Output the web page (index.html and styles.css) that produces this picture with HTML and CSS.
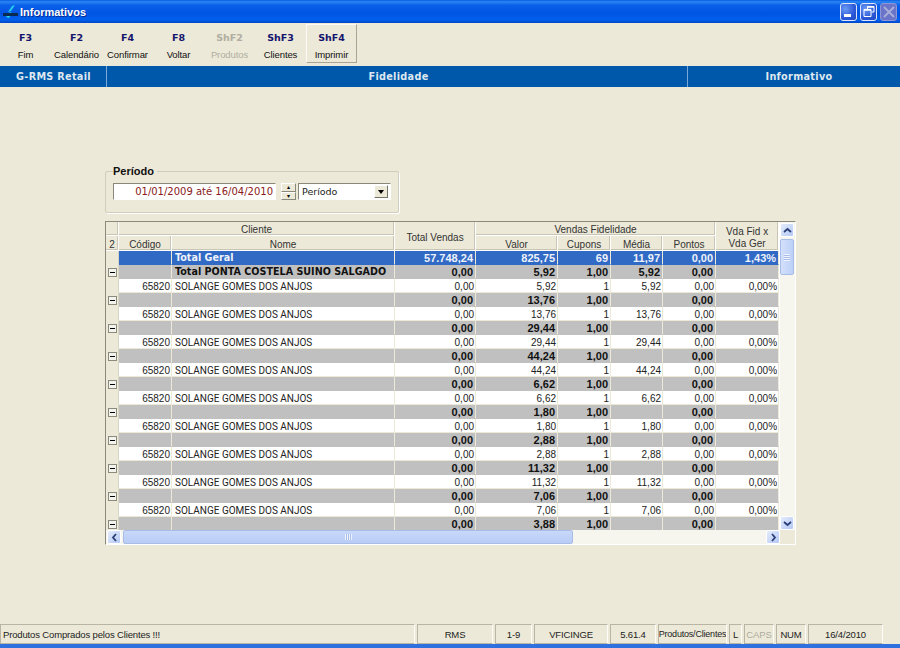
FILE: index.html
```html
<!DOCTYPE html>
<html lang="pt">
<head>
<meta charset="utf-8">
<title>Informativos</title>
<link rel="stylesheet" href="styles.css">
</head>
<body>
<div class="window">
  <header class="titlebar">
    <svg class="app-icon" width="18" height="16" viewBox="0 0 18 16"><path d="M6 8 L10 2 L13 1 L9 7 Z" fill="#22d0e8"/><path d="M4 13 L8 8 L10 9 L7 14 Z" fill="#22d0e8"/><rect x="1" y="9" width="15" height="3" fill="#0a2a50"/></svg>
    <span class="title-text">Informativos</span>
    <div class="win-buttons">
      <span class="win-btn"><svg width="16" height="16" viewBox="0 0 16 16"><rect x="3" y="10" width="7" height="3" fill="#fff"/></svg></span>
      <span class="win-btn"><svg width="16" height="16" viewBox="0 0 16 16"><path d="M6.500 5V2.500H13V8H10.500M3 5.500H10V12.500H3Z" fill="none" stroke="#fff" stroke-width="1"/><path d="M6.500 3H13M3 6H10" stroke="#fff" stroke-width="1.500"/></svg></span>
      <span class="win-btn win-btn-off"><svg width="16" height="16" viewBox="0 0 16 16"><path d="M3 3L13 13M13 3L3 13" stroke="#a8aed8" stroke-width="2"/></svg></span>
    </div>
  </header>

  <nav class="toolbar">
    <div class="tool"><b>F3</b><span>Fim</span></div>
    <div class="tool"><b>F2</b><span>Calendário</span></div>
    <div class="tool"><b>F4</b><span>Confirmar</span></div>
    <div class="tool"><b>F8</b><span>Voltar</span></div>
    <div class="tool tool-off"><b>ShF2</b><span>Produtos</span></div>
    <div class="tool"><b>ShF3</b><span>Clientes</span></div>
    <div class="tool tool-raised"><b>ShF4</b><span>Imprimir</span></div>
  </nav>

  <div class="bluebar">
    <div class="bb bb-a">G-RMS Retail</div>
    <div class="bb bb-b">Fidelidade</div>
    <div class="bb bb-c">Informativo</div>
  </div>

  <main class="content">
    <fieldset class="period">
      <legend>Período</legend>
      <div class="period-row">
        <div class="date-field">01/01/2009 até 16/04/2010</div>
        <div class="spin"><span class="spin-btn">▴</span><span class="spin-btn">▾</span></div>
        <div class="combo"><span class="combo-text">Período</span><span class="combo-btn"><i class="arrow-down"></i></span></div>
      </div>
    </fieldset>

    <section class="gridbox">
      <div class="grid-clip">
        <table class="grid">
          <colgroup>
            <col class="c0"><col class="c1"><col class="c2"><col class="c3"><col class="c4"><col class="c5"><col class="c6"><col class="c7"><col class="c8">
          </colgroup>
          <thead>
            <tr>
              <th class="corner"></th><th colspan="2">Cliente</th><th rowspan="2" class="tv">Total Vendas</th><th colspan="4">Vendas Fidelidade</th><th rowspan="2" class="two-line">Vda Fid x<br>Vda Ger</th>
            </tr>
            <tr>
              <th class="corner level">2</th><th>Código</th><th>Nome</th><th>Valor</th><th>Cupons</th><th>Média</th><th>Pontos</th>
            </tr>
          </thead>
          <tbody>
            <tr class="sel"><td class="rh"></td><td></td><td class="txt">Total Geral</td><td>57.748,24</td><td>825,75</td><td>69</td><td>11,97</td><td>0,00</td><td>1,43%</td></tr>
            <tr class="sub"><td class="rh"><i class="minus"></i></td><td></td><td class="txt">Total PONTA COSTELA SUINO SALGADO</td><td>0,00</td><td>5,92</td><td>1,00</td><td>5,92</td><td>0,00</td><td></td></tr>
            <tr class="row"><td class="rh"></td><td>65820</td><td class="txt">SOLANGE GOMES DOS ANJOS</td><td>0,00</td><td>5,92</td><td>1</td><td>5,92</td><td>0,00</td><td>0,00%</td></tr>
            <tr class="sub"><td class="rh"><i class="minus"></i></td><td></td><td class="txt"></td><td>0,00</td><td>13,76</td><td>1,00</td><td></td><td>0,00</td><td></td></tr>
            <tr class="row"><td class="rh"></td><td>65820</td><td class="txt">SOLANGE GOMES DOS ANJOS</td><td>0,00</td><td>13,76</td><td>1</td><td>13,76</td><td>0,00</td><td>0,00%</td></tr>
            <tr class="sub"><td class="rh"><i class="minus"></i></td><td></td><td class="txt"></td><td>0,00</td><td>29,44</td><td>1,00</td><td></td><td>0,00</td><td></td></tr>
            <tr class="row"><td class="rh"></td><td>65820</td><td class="txt">SOLANGE GOMES DOS ANJOS</td><td>0,00</td><td>29,44</td><td>1</td><td>29,44</td><td>0,00</td><td>0,00%</td></tr>
            <tr class="sub"><td class="rh"><i class="minus"></i></td><td></td><td class="txt"></td><td>0,00</td><td>44,24</td><td>1,00</td><td></td><td>0,00</td><td></td></tr>
            <tr class="row"><td class="rh"></td><td>65820</td><td class="txt">SOLANGE GOMES DOS ANJOS</td><td>0,00</td><td>44,24</td><td>1</td><td>44,24</td><td>0,00</td><td>0,00%</td></tr>
            <tr class="sub"><td class="rh"><i class="minus"></i></td><td></td><td class="txt"></td><td>0,00</td><td>6,62</td><td>1,00</td><td></td><td>0,00</td><td></td></tr>
            <tr class="row"><td class="rh"></td><td>65820</td><td class="txt">SOLANGE GOMES DOS ANJOS</td><td>0,00</td><td>6,62</td><td>1</td><td>6,62</td><td>0,00</td><td>0,00%</td></tr>
            <tr class="sub"><td class="rh"><i class="minus"></i></td><td></td><td class="txt"></td><td>0,00</td><td>1,80</td><td>1,00</td><td></td><td>0,00</td><td></td></tr>
            <tr class="row"><td class="rh"></td><td>65820</td><td class="txt">SOLANGE GOMES DOS ANJOS</td><td>0,00</td><td>1,80</td><td>1</td><td>1,80</td><td>0,00</td><td>0,00%</td></tr>
            <tr class="sub"><td class="rh"><i class="minus"></i></td><td></td><td class="txt"></td><td>0,00</td><td>2,88</td><td>1,00</td><td></td><td>0,00</td><td></td></tr>
            <tr class="row"><td class="rh"></td><td>65820</td><td class="txt">SOLANGE GOMES DOS ANJOS</td><td>0,00</td><td>2,88</td><td>1</td><td>2,88</td><td>0,00</td><td>0,00%</td></tr>
            <tr class="sub"><td class="rh"><i class="minus"></i></td><td></td><td class="txt"></td><td>0,00</td><td>11,32</td><td>1,00</td><td></td><td>0,00</td><td></td></tr>
            <tr class="row"><td class="rh"></td><td>65820</td><td class="txt">SOLANGE GOMES DOS ANJOS</td><td>0,00</td><td>11,32</td><td>1</td><td>11,32</td><td>0,00</td><td>0,00%</td></tr>
            <tr class="sub"><td class="rh"><i class="minus"></i></td><td></td><td class="txt"></td><td>0,00</td><td>7,06</td><td>1,00</td><td></td><td>0,00</td><td></td></tr>
            <tr class="row"><td class="rh"></td><td>65820</td><td class="txt">SOLANGE GOMES DOS ANJOS</td><td>0,00</td><td>7,06</td><td>1</td><td>7,06</td><td>0,00</td><td>0,00%</td></tr>
            <tr class="sub"><td class="rh"><i class="minus"></i></td><td></td><td class="txt"></td><td>0,00</td><td>3,88</td><td>1,00</td><td></td><td>0,00</td><td></td></tr>
          </tbody>
        </table>
      </div>
      <div class="vscroll">
        <span class="sb-btn"><svg width="9" height="7" viewBox="0 0 9 7"><path d="M1 5L4.500 2L8 5" fill="none" stroke="#2a3f78" stroke-width="1.800"/></svg></span>
        <span class="thumb thumb-v"><i class="grip-v"></i></span>
        <span class="sb-gap"></span>
        <span class="sb-btn"><svg width="9" height="7" viewBox="0 0 9 7"><path d="M1 2L4.500 5L8 2" fill="none" stroke="#2a3f78" stroke-width="1.800"/></svg></span>
      </div>
      <div class="hscroll">
        <span class="sb-btn"><svg width="7" height="9" viewBox="0 0 7 9"><path d="M5 1L2 4.500L5 8" fill="none" stroke="#2a3f78" stroke-width="1.800"/></svg></span>
        <span class="thumb thumb-h"><i class="grip-h"></i></span>
        <span class="sb-gap"></span>
        <span class="sb-btn"><svg width="7" height="9" viewBox="0 0 7 9"><path d="M2 1L5 4.500L2 8" fill="none" stroke="#2a3f78" stroke-width="1.800"/></svg></span>
      </div>
      <div class="sb-corner"></div>
    </section>
  </main>

  <footer class="statusbar">
    <div class="panel p-msg">Produtos Comprados pelos Clientes !!!</div>
    <div class="panel p-rms">RMS</div>
    <div class="panel p-pg">1-9</div>
    <div class="panel p-user">VFICINGE</div>
    <div class="panel p-ver">5.61.4</div>
    <div class="panel p-mod">Produtos/Clientes</div>
    <div class="panel p-l">L</div>
    <div class="panel p-caps">CAPS</div>
    <div class="panel p-num">NUM</div>
    <div class="panel p-date">16/4/2010</div>
  </footer>
  <div class="bottom-frame"></div>
</div>
</body>
</html>
```

FILE: styles.css
```css
* { box-sizing: border-box; }
html, body { margin: 0; padding: 0; }
body { width: 900px; height: 648px; overflow: hidden; background: #ece9d8; font-family: "Liberation Sans", Arial, sans-serif; color: #000; }
.window { width: 900px; height: 648px; display: flex; flex-direction: column; }

.titlebar { height: 23px; flex: none; display: flex; align-items: center; padding-left: 2px; background: linear-gradient(180deg, #0a5ce0 0%, #2a86f4 8%, #0a60e8 22%, #0054e3 60%, #0060ee 85%, #0048c8 100%); }
.app-icon { flex: none; }
.title-text { font-weight: bold; font-size: 11px; color: #fff; text-shadow: 1px 1px 0 #0a2a90; }
.win-buttons { margin-left: auto; display: flex; gap: 3px; padding-right: 3px; }
.win-btn { width: 17px; height: 18px; display: block; border: 1px solid #dfe6fa; border-radius: 3px; background: radial-gradient(circle at 30% 30%, #6a9af4 0%, #2a58d8 60%, #2048c0 100%); overflow: hidden; }
.win-btn svg { display: block; }
.win-btn-off { background: #6a74c8; border-color: #8f96d6; }

.toolbar { height: 41px; flex: none; display: flex; padding-top: 1px; }
.tool { width: 51px; height: 39px; display: flex; flex-direction: column; align-items: center; padding-top: 8px; font-size: 9.500px; color: #111; white-space: nowrap; }
.tool b { font-family: "DejaVu Sans", sans-serif; font-size: 9.500px; line-height: 12px; color: #14146e; }
.tool span { margin-top: 5px; line-height: 11px; letter-spacing: -.1px; }
.tool-off b, .tool-off span { color: #b0aea0; }
.tool-raised { border: 1px solid; border-color: #fbfaf4 #a8a596 #a8a596 #fbfaf4; padding-top: 7px; }

.bluebar { height: 21px; margin-top: 2px; flex: none; display: flex; background: #0058aa; color: #dfe8f0; font-family: "DejaVu Sans", sans-serif; font-weight: bold; font-size: 9.700px; letter-spacing: .3px; }
.bb { display: flex; align-items: center; justify-content: center; border-right: 1px solid #7aa8d8; }
.bb-a { width: 107px; padding-left: 1px; }
.bb-b { width: 581px; padding-left: 3px; }
.bb-c { flex: 1; border-right: 0; padding-left: 10px; }

.content { flex: 1; display: flex; flex-direction: column; align-items: flex-start; padding: 79px 0 0 105px; min-height: 0; }

.period { width: 294px; height: 47px; margin: 0; padding: 6px 7px 0 7px; border: 1px solid #d0cdbc; border-radius: 2px; box-shadow: 1px 1px 0 #fff; }
.period legend { padding: 0 3px 0 0; font-weight: bold; font-size: 11px; line-height: 11px; color: #111; }
.period-row { display: flex; align-items: flex-start; }
.date-field { width: 163px; height: 17px; padding-right: 2px; text-align: right; font-family: "DejaVu Sans", sans-serif; font-size: 10px; line-height: 16px; color: #8a1a20; background: #fff; border: 1px solid; border-color: #8a887a #fff #fff #8a887a; }
.spin { width: 15px; height: 17px; margin-left: 5px; display: flex; flex-direction: column; }
.spin-btn { flex: 1; display: flex; align-items: center; justify-content: center; font-size: 6px; line-height: 1; background: #ece9d8; border: 1px solid; border-color: #fff #8a887a #8a887a #fff; overflow: hidden; }
.combo { width: 93px; height: 17px; margin-left: 2px; display: flex; background: #fff; border: 1px solid; border-color: #8a887a #fff #fff #8a887a; }
.combo-text { flex: 1; padding-left: 3px; font-family: "DejaVu Sans", sans-serif; font-size: 9.500px; line-height: 15px; color: #222; }
.combo-btn { width: 14px; margin: 1px 2px 1px 0; background: #ece9d8; border: 1px solid; border-color: #fff #77756a #77756a #fff; display: flex; align-items: center; justify-content: center; }
.arrow-down { width: 0; height: 0; border: solid transparent; border-width: 4px 3.500px 0; border-top-color: #000; }

.gridbox { margin-top: 8px; width: 691px; height: 324px; display: grid; grid-template-columns: 674px 15px; grid-template-rows: 308px 14px; border: 1px solid; border-color: #8c8a7c #fff #fff #8c8a7c; background: #ece9d8; }
.grid-clip { overflow: hidden; background: #fff; }
.grid { width: 673px; table-layout: fixed; border-collapse: separate; border-spacing: 0; font-size: 10px; }
.c0 { width: 13px; } .c1 { width: 53px; } .c2 { width: 223px; } .c3 { width: 81px; } .c4 { width: 82px; } .c5 { width: 53px; } .c6 { width: 52px; } .c7 { width: 53px; } .c8 { width: 63px; }
.grid th { height: 14px; padding: 2px 0 0; font-weight: normal; font-size: 10px; line-height: 11px; color: #333; text-align: center; background: #ece9d8; border-right: 1px solid #fff; border-bottom: 1px solid #fff; box-shadow: inset -1px -1px 0 #c8c5b4; overflow: hidden; white-space: nowrap; }
.grid thead tr:nth-child(2) th { height: 15px; }
.grid th.tv { padding-top: 3px; line-height: 13px; }
.grid th.two-line { padding-top: 3px; line-height: 12px; }
.grid td { height: 14px; padding: 2px 1px 0 0; text-align: right; font-size: 10px; line-height: 11px; overflow: hidden; white-space: nowrap; border-right: 1px solid #ece9d8; border-bottom: 1px solid #ece9d8; }
.grid td.txt { text-align: left; padding-left: 3px; font-family: Roboto, sans-serif; font-size: 10px; }
.grid td.rh { background: #ece9d8; border-right: 1px solid #d8d5c4; text-align: center; padding: 0; }
.row td { background: #fff; color: #222; }
.grid .sub td, .grid .sel td { padding: 1px 2px 0 0; font-weight: bold; font-size: 11px; line-height: 12px; }
.sub td { background: #c0c0c0; color: #111; border-bottom-color: #c0c0c0; }
.sel td { background: #316ac5; color: #eef2fa; border-bottom-color: #316ac5; }
.grid .sub td.txt, .grid .sel td.txt { padding-left: 3px; font-family: "DejaVu Sans", sans-serif; font-size: 9.600px; }
.grid .sub td.rh, .grid .sel td.rh { padding: 0; background: #ece9d8; border-bottom-color: #ece9d8; }
.minus { display: block; width: 9px; height: 9px; margin: 2px 0 0 2px; background: linear-gradient(#000, #000) center / 5px 1px no-repeat, #f4f4ee; border: 1px solid #8c8a7c; }

.vscroll, .hscroll { display: flex; background: #f6f5ee; }
.vscroll { flex-direction: column; padding: 1px 1px 0 0; }
.hscroll { padding: 0 0 0 1px; }
.sb-btn { flex: none; width: 14px; height: 14px; display: flex; align-items: center; justify-content: center; background: linear-gradient(135deg, #e4ecfc, #b4c8f4); border: 1px solid #fff; border-radius: 2px; }
.thumb { display: flex; align-items: center; justify-content: center; background: linear-gradient(90deg, #d4e0fb, #bcd0f8); border: 1px solid #a8bce8; border-radius: 2px; }
.thumb-v { flex: none; width: 14px; height: 36px; margin-top: 2px; }
.thumb-h { flex: none; width: 450px; height: 14px; margin-left: 2px; background: linear-gradient(180deg, #c8d8fa, #b8ccf6); }
.grip-v { width: 6px; height: 7px; background: repeating-linear-gradient(180deg, #eef3fe 0 1px, #a9bde8 1px 2px); }
.grip-h { width: 7px; height: 6px; background: repeating-linear-gradient(90deg, #eef3fe 0 1px, #a9bde8 1px 2px); }
.sb-gap { flex: 1; }
.sb-corner { background: #ece9d8; }

.statusbar { height: 20px; flex: none; display: flex; gap: 2px; font-size: 9.500px; letter-spacing: -.15px; color: #222; }
.panel { height: 20px; flex: none; display: flex; align-items: center; justify-content: center; white-space: nowrap; overflow: hidden; border: 1px solid; border-color: #b8b5a4 #fdfcf6 #b8b5a4 #b8b5a4; background: #ece9d8; }
.p-msg { width: 415px; justify-content: flex-start; padding-left: 2px; }
.p-rms { width: 76px; }
.p-pg { width: 37px; }
.p-user { width: 74px; }
.p-ver { width: 46px; }
.p-mod { width: 69px; font-size: 9px; letter-spacing: -.2px; }
.p-l { width: 13px; }
.p-caps { width: 30px; color: #aeac9e; }
.p-num { width: 30px; }
.p-date { width: 75px; }
.bottom-frame { height: 4px; flex: none; background: #2e70de; }
```
